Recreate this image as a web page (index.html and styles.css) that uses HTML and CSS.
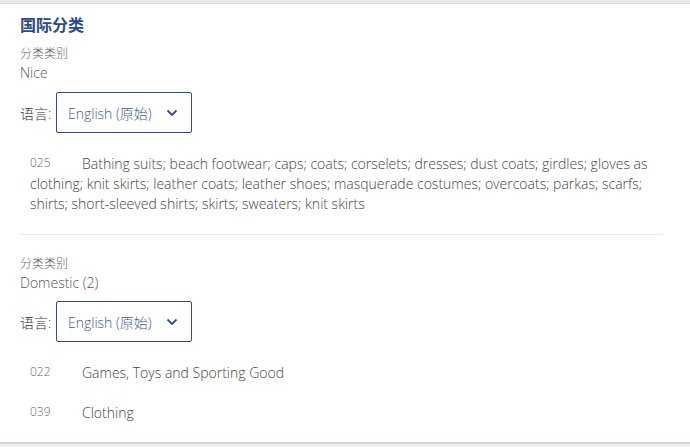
FILE: index.html
```html
<!DOCTYPE html>
<html lang="zh">
<head>
<meta charset="utf-8">
<link rel="stylesheet" href="styles.css">
</head>
<body>
<div class="topband"></div>
<main class="card">
  <h2 class="title">国际分类</h2>
  <section class="section">
    <div class="label">分类类别</div>
    <div class="value">Nice</div>
    <div class="lang-row">
      <span class="lang-label">语言:</span>
      <div class="select">
        <span class="select-text">English (原始)</span>
        <svg class="chev" width="12" height="8" viewBox="0 0 12 8"><path d="M1.5 1.5 L6 6 L10.5 1.5" fill="none" stroke="#2f4b8c" stroke-width="1.8"/></svg>
      </div>
    </div>
    <div class="items">
      <p class="item"><span class="code">025</span>Bathing suits; beach footwear; caps; coats; corselets; dresses; dust coats; girdles; gloves as clothing; knit skirts; leather coats; leather shoes; masquerade costumes; overcoats; parkas; scarfs; shirts; short-sleeved shirts; skirts; sweaters; knit skirts</p>
    </div>
  </section>
  <section class="section last">
    <div class="label">分类类别</div>
    <div class="value">Domestic (2)</div>
    <div class="lang-row">
      <span class="lang-label">语言:</span>
      <div class="select">
        <span class="select-text">English (原始)</span>
        <svg class="chev" width="12" height="8" viewBox="0 0 12 8"><path d="M1.5 1.5 L6 6 L10.5 1.5" fill="none" stroke="#2f4b8c" stroke-width="1.8"/></svg>
      </div>
    </div>
    <div class="items">
      <p class="item"><span class="code">022</span>Games, Toys and Sporting Good</p>
      <p class="item"><span class="code">039</span>Clothing</p>
    </div>
  </section>
</main>
</body>
</html>
```
FILE: styles.css
```css
html, body {
  margin: 0;
  padding: 0;
}
body {
  background: #eef0f3;
  font-family: "Open Sans", "Noto Sans CJK SC", sans-serif;
  font-weight: 300;
  color: #333;
  width: 690px;
  height: 447px;
  overflow: hidden;
}
.topband {
  height: 3px;
  background: #e6e8ec;
  border-bottom: 1px solid #d5d8dd;
}
.card {
  background: #fff;
  padding: 9px 27px 0 20px;
  height: 429px;
  border-bottom: 2px solid #d4d4d4;
}
.title {
  margin: 0;
  font-size: 16px;
  line-height: 24px;
  font-weight: 700;
  color: #2b4a8c;
}
.section {
  padding-bottom: 20px;
  border-bottom: 1px solid #ececec;
}
.section.last {
  border-bottom: none;
  padding-bottom: 0;
  padding-top: 20px;
}
.label {
  margin-top: 8px;
  font-size: 12px;
  line-height: 18px;
  color: #666;
}
.section.last .label {
  margin-top: 0;
}
.value {
  font-size: 14px;
  line-height: 20px;
  color: #555;
}
.lang-row {
  display: flex;
  align-items: center;
  margin-top: 9px;
}
.section.last .lang-row {
  margin-top: 8px;
}
.lang-label {
  font-size: 14px;
  color: #333;
  width: 36px;
  flex: none;
}
.select {
  box-sizing: border-box;
  width: 136px;
  height: 41px;
  border: 1px solid #2f4b8c;
  border-radius: 2px;
  display: flex;
  align-items: center;
  padding: 0 13px 0 11px;
  justify-content: space-between;
}
.select-text {
  font-size: 14px;
  color: #3f5b98;
}
.items {
  margin-top: 21px;
  padding-left: 10px;
  display: flex;
  flex-direction: column;
  gap: 20px;
}
.item {
  margin: 0;
  font-size: 14px;
  line-height: 20px;
  color: #444;
}
.code {
  display: inline-block;
  width: 52px;
  font-size: 12px;
  color: #666;
  vertical-align: top;
  line-height: 18px;
}
```
